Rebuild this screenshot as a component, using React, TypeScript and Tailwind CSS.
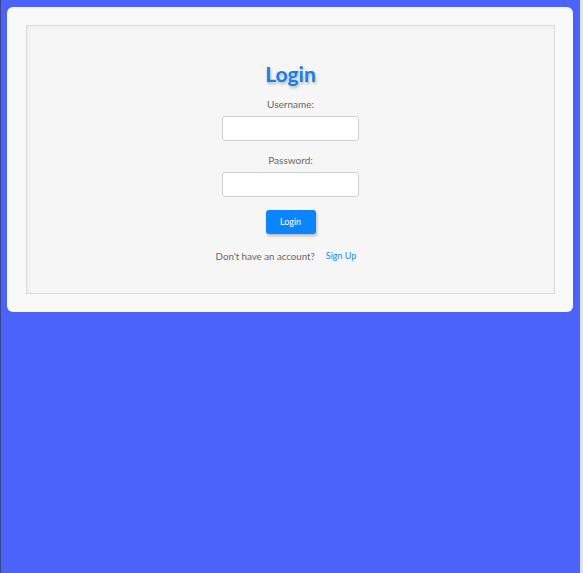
import React from "react";

export default function App() {
  return (
    <div className="flex min-h-[573px] w-full bg-[#4b63f8] font-['Lato',sans-serif]">
      {/* Window edge */}
      <div className="w-[1px] bg-[#3a4590]" />
      <main className="flex-1 p-[6px] pt-[7px]">
        {/* Outer card */}
        <div className="h-[305px] w-[566px] rounded-[6px] bg-[#f9f9f9] pt-[18px] pl-[19px]">
          {/* Inner panel */}
          <div className="flex h-[269px] w-[529px] flex-col items-center border border-[#dadada] bg-[#f6f6f6] pt-[34px] shadow-[inset_2px_2px_4px_rgba(0,0,0,0.04)]">
            <h1 className="text-[21px] font-bold leading-[28px] text-[#1a7fe4] [text-shadow:1px_2px_3px_rgba(0,0,0,0.28)]">
              Login
            </h1>

            <label className="mt-[9px] text-[10px] leading-[14px] text-[#666]">Username:</label>
            <input
              type="text"
              className="mt-[5px] h-[25px] w-[137px] rounded-[3px] border border-[#d0d0d0] bg-white outline-none"
            />

            <label className="mt-[12px] text-[10px] leading-[14px] text-[#666]">Password:</label>
            <input
              type="password"
              className="mt-[5px] h-[25px] w-[137px] rounded-[3px] border border-[#d0d0d0] bg-white outline-none"
            />

            <button className="mt-[13px] h-[24px] w-[50px] rounded-[3px] bg-[#0a84ff] text-[9px] text-white shadow-[1px_2px_3px_rgba(0,0,0,0.25)]">
              Login
            </button>

            <div className="mt-[15px] mr-[9px] flex items-center gap-[11px] leading-[14px]">
              <span className="text-[9.7px] text-[#666]">Don't have an account?</span>
              <a className="text-[9px] text-[#1e88e5]">Sign Up</a>
            </div>
          </div>
        </div>
      </main>
      {/* Scrollbar strip */}
      <div className="w-[3px] bg-[#dfe2ee]" />
    </div>
  );
}
